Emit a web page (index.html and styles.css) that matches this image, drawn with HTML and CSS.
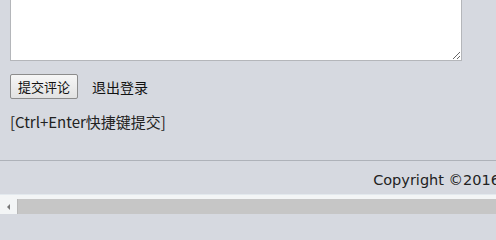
FILE: index.html
```html
<!DOCTYPE html>
<html lang="zh-CN">
<head>
<meta charset="utf-8">
<title>评论</title>
<link rel="stylesheet" href="styles.css">
</head>
<body>
<div class="page">
  <div class="editor">
    <textarea class="comment-box"></textarea>
    <div class="actions">
      <button class="submit-btn" type="button">提交评论</button>
      <a class="logout" href="#">退出登录</a>
    </div>
    <p class="hint">[Ctrl+Enter快捷键提交]</p>
  </div>
  <div class="footer">Copyright ©2016</div>
</div>
<div class="hscroll">
  <div class="hscroll-arrow"><span class="tri"></span></div>
  <div class="hscroll-thumb"></div>
</div>
</body>
</html>
```

FILE: styles.css
```css
html, body {
  margin: 0;
  padding: 0;
  overflow: hidden;
  background: #d6d9e0;
}
body {
  font-family: "Noto Sans CJK SC", "DejaVu Sans", sans-serif;
  color: #111;
  width: 496px;
  height: 214px;
}
.page {
  display: flex;
  flex-direction: column;
}
.editor {
  padding: 0 10px;
}
.comment-box {
  display: block;
  box-sizing: border-box;
  width: 452px;
  height: 63px;
  margin: -2px 0 0 0;
  border: 1px solid #b4b6ba;
  background: #fff;
  padding: 2px;
}
.actions {
  display: flex;
  align-items: center;
  margin-top: 13px;
  height: 25px;
}
.submit-btn {
  box-sizing: border-box;
  width: 68px;
  height: 25px;
  padding: 0;
  border: 1px solid #8c8c8c;
  border-radius: 2px;
  background: linear-gradient(#f6f6f6, #e2e2e2);
  font-family: "Noto Sans CJK SC", sans-serif;
  font-size: 13px;
  color: #111;
}
.logout {
  margin-left: 14px;
  font-size: 14px;
  color: #111;
  text-decoration: none;
}
.hint {
  margin: 12px 0 0 0;
  font-size: 15px;
  line-height: 21px;
  color: #222;
}
.footer {
  margin-top: 28px;
  margin-right: -4px;
  border-top: 1px solid #aeb2b9;
  border-bottom: 1px solid #e3e9ee;
  padding: 10px 0 5px;
  height: 18px;
  line-height: 18px;
  text-align: right;
  font-family: "DejaVu Sans", sans-serif;
  font-size: 14.5px;
  color: #222;
  white-space: nowrap;
}
.hscroll {
  display: flex;
  height: 19px;
  box-sizing: border-box;
  padding-top: 4px;
  background: #f3f5f6;
}
.hscroll-arrow {
  width: 17px;
  display: flex;
  align-items: center;
  justify-content: center;
}
.tri {
  width: 0;
  height: 0;
  border-top: 3px solid transparent;
  border-bottom: 3px solid transparent;
  border-right: 3px solid #777;
}
.hscroll-thumb {
  flex: 1;
  background: #c6c6c6;
  border-left: 1px solid #b8b8b8;
}
```
